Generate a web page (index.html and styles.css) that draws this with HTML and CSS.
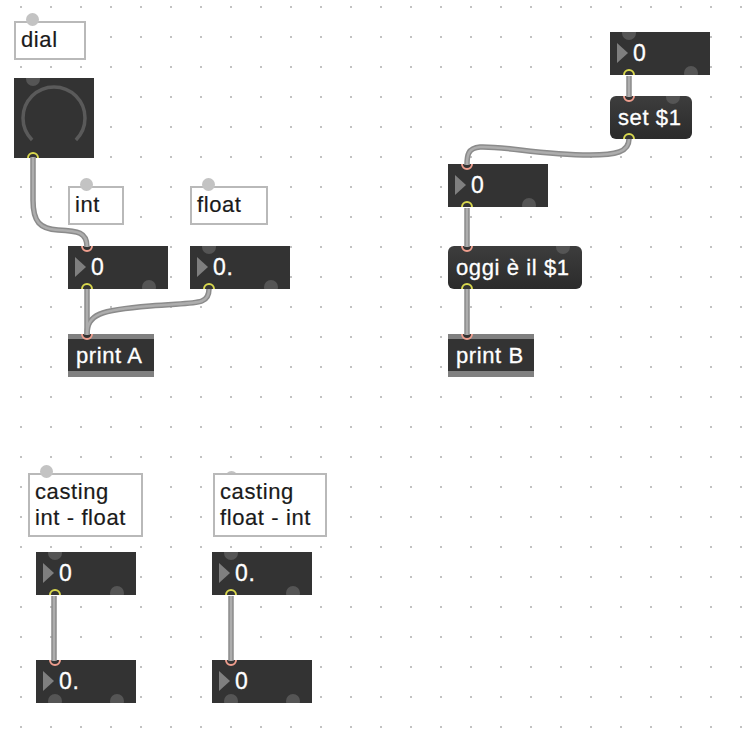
FILE: index.html
```html
<!DOCTYPE html>
<html lang="it">
<head>
    <meta charset="UTF-8">
    <title>casting patch</title>
    <link rel="stylesheet" href="styles.css">
</head>
<body>
    <div class="patcher">
        <svg class="grid" width="750" height="738">
            <defs>
                <pattern id="dots" width="30" height="30" patternUnits="userSpaceOnUse">
                    <rect x="20" y="6" width="2" height="2" fill="#c2c2c2"></rect>
                </pattern>
            </defs>
            <rect width="750" height="738" fill="url(#dots)"></rect>
        </svg>

        <!-- left column -->
        <div class="box comment c-dial"><span class="c-inlet"></span>dial</div>

        <div class="box dial">
            <svg width="80" height="80">
                <path d="M18.1 61.9 A31 31 0 1 1 61.9 61.9" fill="none" stroke="#5a5a5a" stroke-width="3.5"></path>
            </svg>
            <span class="port dot in left"></span>
            <span class="port ring out left yellow"></span>
        </div>

        <div class="box comment c-int"><span class="c-inlet"></span>int</div>
        <div class="box comment c-float"><span class="c-inlet"></span>float</div>

        <div class="box num n-int">
            <span class="tri"></span><span class="val">0</span>
            <span class="port ring in left salmon"></span>
            <span class="port ring out left yellow"></span>
            <span class="port dot out right"></span>
        </div>
        <div class="box num n-float">
            <span class="tri"></span><span class="val">0.</span>
            <span class="port dot in left"></span>
            <span class="port ring out left yellow"></span>
            <span class="port dot out right"></span>
        </div>

        <div class="box obj o-printa">
            <span class="label">print A</span>
            <span class="port ring in left salmon"></span>
        </div>

        <!-- right column -->
        <div class="box num n-top">
            <span class="tri"></span><span class="val">0</span>
            <span class="port dot in left"></span>
            <span class="port ring out left yellow"></span>
            <span class="port dot out right"></span>
        </div>
        <div class="box msg m-set">
            <span class="label">set $1</span>
            <span class="port ring in left salmon"></span>
            <span class="port dot in right"></span>
            <span class="port ring out left yellow"></span>
        </div>
        <div class="box num n-mid">
            <span class="tri"></span><span class="val">0</span>
            <span class="port ring in left salmon"></span>
            <span class="port ring out left yellow"></span>
            <span class="port dot out right"></span>
        </div>
        <div class="box msg m-oggi">
            <span class="label">oggi è il $1</span>
            <span class="port ring in left salmon"></span>
            <span class="port dot in right"></span>
            <span class="port ring out left yellow"></span>
        </div>
        <div class="box obj o-printb">
            <span class="label">print B</span>
            <span class="port ring in left salmon"></span>
        </div>

        <!-- casting -->
        <div class="box comment c-cast1"><span class="c-inlet"></span>casting<br>int - float</div>
        <div class="box comment c-cast2"><span class="c-inlet behind"></span>casting<br>float - int</div>

        <div class="box num n-cast1">
            <span class="tri"></span><span class="val">0</span>
            <span class="port dot in left"></span>
            <span class="port ring out left yellow"></span>
            <span class="port dot out right"></span>
        </div>
        <div class="box num n-cast2">
            <span class="tri"></span><span class="val">0.</span>
            <span class="port dot in left"></span>
            <span class="port ring out left yellow"></span>
            <span class="port dot out right"></span>
        </div>
        <div class="box num n-res1">
            <span class="tri"></span><span class="val">0.</span>
            <span class="port ring in left salmon"></span>
            <span class="port dot out left"></span>
            <span class="port dot out right"></span>
        </div>
        <div class="box num n-res2">
            <span class="tri"></span><span class="val">0</span>
            <span class="port ring in left salmon"></span>
            <span class="port dot out left"></span>
            <span class="port dot out right"></span>
        </div>

        <!-- patch cords -->
        <svg class="cords" width="750" height="738">
            <g class="cord-outer">
                <path d="M33 157 L33 200 C33 222 40 229 58 230 C78 231 87 232 87 247"></path>
                <path d="M87 289 L87 334"></path>
                <path d="M209 289 C209 306 196 302 150 306 C100 310 87 314 87 335"></path>
                <path d="M629 76 L629 97"></path>
                <path d="M629 139 C629 152 616 155 590 155 C540 155 505 146 480 147 C468 148 467 155 467 165"></path>
                <path d="M467 208 L467 247"></path>
                <path d="M467 289 L467 335"></path>
                <path d="M54 596 L54 661"></path>
                <path d="M231 596 L231 661"></path>
            </g>
            <g class="cord-inner">
                <path d="M33 157 L33 200 C33 222 40 229 58 230 C78 231 87 232 87 247"></path>
                <path d="M87 289 L87 334"></path>
                <path d="M209 289 C209 306 196 302 150 306 C100 310 87 314 87 335"></path>
                <path d="M629 76 L629 97"></path>
                <path d="M629 139 C629 152 616 155 590 155 C540 155 505 146 480 147 C468 148 467 155 467 165"></path>
                <path d="M467 208 L467 247"></path>
                <path d="M467 289 L467 335"></path>
                <path d="M54 596 L54 661"></path>
                <path d="M231 596 L231 661"></path>
            </g>
        </svg>
    </div>
</body>
</html>
```

FILE: styles.css
```css
/* General */
body {
    margin: 0;
    background: #fff;
    font-family: 'Liberation Sans', Arial, sans-serif;
}

.patcher {
    position: relative;
    z-index: 0;
    width: 750px;
    height: 738px;
    overflow: hidden;
    background: #fff;
}

.grid,
.cords {
    position: absolute;
    left: 0;
    top: 0;
}

.cords {
    z-index: 5;
    pointer-events: none;
}

.cord-outer path {
    fill: none;
    stroke: #8b8b8b;
    stroke-width: 5.5;
}

.cord-inner path {
    fill: none;
    stroke: #adadad;
    stroke-width: 2.5;
}

/* Boxes on the canvas */
.box {
    position: absolute;
    box-sizing: border-box;
}

.comment {
    background: #fff;
    border: 2px solid #b9b9b9;
    padding: 4px 5px;
    font-size: 22px;
    line-height: 26px;
    color: #1a1a1a;
    letter-spacing: 0.6px;
    white-space: nowrap;
    -webkit-text-stroke: 0.2px #1a1a1a;
}

.c-inlet {
    position: absolute;
    left: 10px;
    top: -10px;
    width: 13px;
    height: 13px;
    border-radius: 50%;
    background: #c3c3c3;
}

.c-inlet.behind {
    z-index: -1;
    top: -4px;
}

.dial {
    background: #333;
    overflow: hidden;
    width: 80px;
    height: 80px;
}

.dial svg {
    display: block;
}

.num,
.msg,
.obj {
    display: flex;
    align-items: center;
    overflow: hidden;
    color: #fff;
    font-size: 22px;
    letter-spacing: 0.6px;
    white-space: nowrap;
    -webkit-text-stroke: 0.3px #fff;
}

.num {
    width: 100px;
    height: 43px;
    padding-left: 7px;
    background: #333;
    font-size: 23px;
}

.num .tri {
    flex-shrink: 0;
    width: 0;
    height: 0;
    border-left: 11px solid #7f7f7f;
    border-top: 10px solid transparent;
    border-bottom: 10px solid transparent;
    margin-right: 5px;
    margin-bottom: 2px;
}

.msg {
    height: 43px;
    padding-left: 8px;
    border-radius: 6px;
    background: linear-gradient(#3d3d3d, #2b2b2b);
}

.obj {
    width: 86px;
    height: 43px;
    padding: 0 0 0 8px;
    background: #333;
    box-shadow: inset 0 5px #808080, inset 0 -6px #808080;
}

/* inlets and outlets */
.port {
    position: absolute;
    box-sizing: border-box;
    border-radius: 50%;
}

.ring {
    width: 12px;
    height: 12px;
    border: 2px solid;
    background: #333;
}

.ring.left { left: 13px; }
.ring.in { top: -6px; }
.ring.out { bottom: -6px; }
.salmon { border-color: #ef9e8e; }
.yellow { border-color: #d8d74e; }

.dot {
    width: 14px;
    height: 14px;
    background: #555;
}

.dot.left { left: 12px; }
.dot.right { right: 12px; }
.dot.in { top: -6px; }
.dot.out { bottom: -5px; }

/* positions on the patcher */
.c-dial { left: 14px; top: 21px; width: 72px; height: 39px; }
.dial { left: 14px; top: 78px; }
.c-int { left: 68px; top: 186px; width: 56px; height: 39px; }
.c-float { left: 190px; top: 186px; width: 78px; height: 39px; }
.n-int { left: 68px; top: 246px; }
.n-float { left: 190px; top: 246px; }
.o-printa { left: 68px; top: 334px; }

.n-top { left: 610px; top: 32px; }
.m-set { left: 610px; top: 96px; width: 82px; }
.n-mid { left: 448px; top: 164px; }
.m-oggi { left: 448px; top: 246px; width: 134px; }
.o-printb { left: 448px; top: 334px; }

.c-cast1 { left: 28px; top: 473px; width: 115px; height: 64px; }
.c-cast2 { left: 213px; top: 473px; width: 114px; height: 64px; }
.n-cast1 { left: 36px; top: 552px; }
.n-cast2 { left: 212px; top: 552px; }
.n-res1 { left: 36px; top: 660px; }
.n-res2 { left: 212px; top: 660px; }
```
